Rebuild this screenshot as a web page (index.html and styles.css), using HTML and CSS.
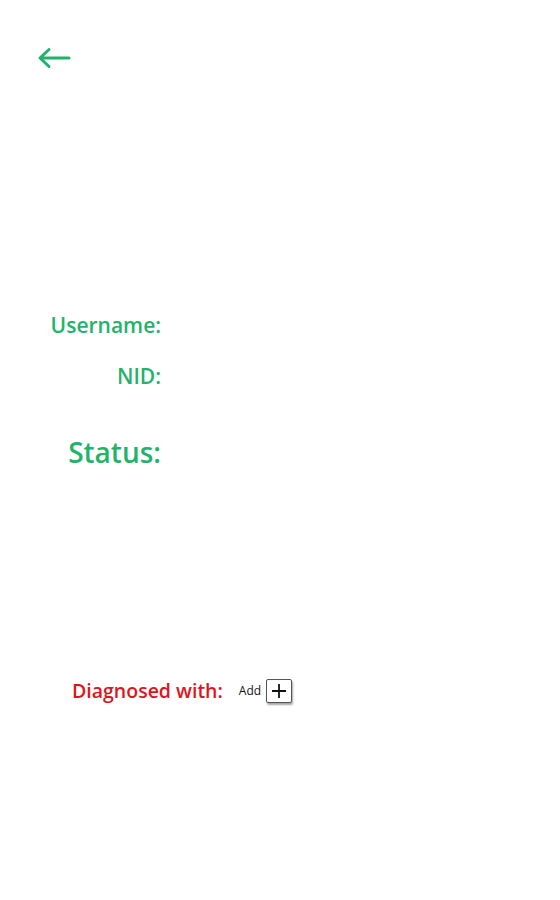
FILE: index.html
```html
<!DOCTYPE html>
<html>
<head>
<meta charset="utf-8">
<link rel="stylesheet" href="styles.css">
</head>
<body>
<div class="page">
  <div class="topbar">
    <svg class="back" width="34" height="24" viewBox="0 0 34 24">
      <path d="M32 12 H4 M12 3.5 L3 12 L12 20.5" fill="none" stroke="#1fb36b" stroke-width="3" stroke-linecap="round" stroke-linejoin="round"/>
    </svg>
  </div>
  <div class="fields">
    <div class="field"><span class="label">Username:</span></div>
    <div class="field nid"><span class="label">NID:</span></div>
    <div class="field status"><span class="label big">Status:</span></div>
  </div>
  <div class="diag">
    <span class="diag-label">Diagnosed with:</span>
    <span class="add-text">Add</span>
    <button class="add-btn" type="button">
      <svg width="16" height="16" viewBox="0 0 16 16"><path d="M8 1 V15 M1 8 H15" stroke="#111" stroke-width="1.8"/></svg>
    </button>
  </div>
</div>
</body>
</html>
```

FILE: styles.css
```css
html, body {
  margin: 0;
  padding: 0;
  background: #ffffff;
}
body {
  font-family: "Open Sans", "Noto Sans", sans-serif;
}
.page {
  width: 560px;
  height: 900px;
  position: relative;
}
.topbar {
  padding: 46px 0 0 37px;
  height: 24px;
}
.back {
  display: block;
}
.fields {
  margin-top: 229px;
  width: 161px;
  display: flex;
  flex-direction: column;
  align-items: flex-end;
}
.field {
  height: 51px;
  display: flex;
  align-items: center;
}
.label {
  color: #1fb36b;
  font-size: 21px;
  font-weight: 600;
}
.status {
  margin-top: 26px;
  height: 50px;
}
.label.big {
  font-size: 28px;
}
.diag {
  margin-top: 200px;
  padding-left: 72px;
  display: flex;
  align-items: center;
}
.diag-label {
  color: #e0141e;
  font-size: 19.5px;
  font-weight: 600;
}
.add-text {
  margin-left: 16px;
  font-size: 12px;
  color: #111;
}
.add-btn {
  margin-left: 5px;
  width: 26px;
  height: 24px;
  padding: 0;
  border: 1px solid #555;
  border-radius: 2px;
  background: #fff;
  box-shadow: 1px 2px 2px rgba(0,0,0,0.35);
  display: flex;
  align-items: center;
  justify-content: center;
}
.add-btn svg {
  display: block;
}
```
